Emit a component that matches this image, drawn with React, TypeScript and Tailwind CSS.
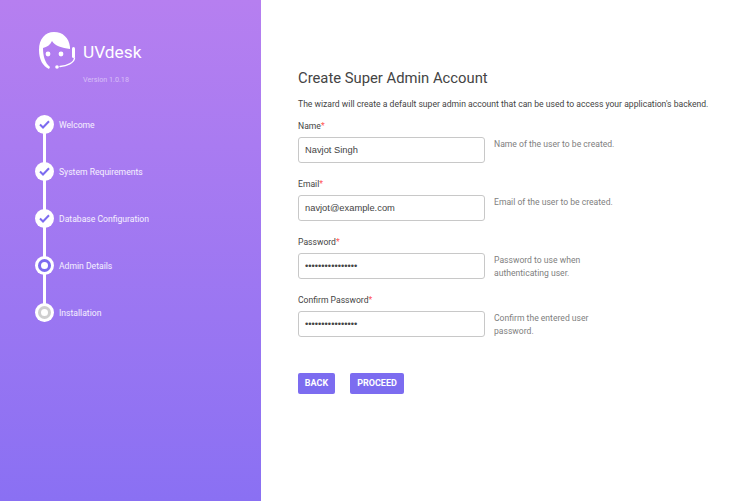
import React from 'react';

const font = { fontFamily: 'Roboto, sans-serif' };

const steps = [
  { label: 'Welcome', state: 'done' },
  { label: 'System Requirements', state: 'done' },
  { label: 'Database Configuration', state: 'done' },
  { label: 'Admin Details', state: 'active' },
  { label: 'Installation', state: 'todo' },
];

const fields = [
  { label: 'Name', value: 'Navjot Singh', type: 'text', help: 'Name of the user to be created.' },
  { label: 'Email', value: 'navjot@example.com', type: 'text', help: 'Email of the user to be created.' },
  { label: 'Password', value: 'aaaaaaaaaaaaaaaa', type: 'password', help: 'Password to use when authenticating user.' },
  { label: 'Confirm Password', value: 'aaaaaaaaaaaaaaaa', type: 'password', help: 'Confirm the entered user password.' },
];

function Logo() {
  return (
    <svg width="37" height="39" viewBox="0 0 37 39" fill="none" className="shrink-0">
      <path d="M10 37C4 34 0 28 0 18C0 7 6 0 15 0C24 0 30 6 31 15L31 17C23 16 16 14 13 9C11 13 8 15 4 16C4 24 6 31 11 35Z" fill="#fff" />
      <circle cx="9" cy="22" r="2.4" fill="#fff" />
      <circle cx="22" cy="22" r="2.4" fill="#fff" />
      <rect x="33" y="15" width="3" height="11" rx="1.5" fill="#fff" />
      <path d="M35.5 26C35 31 28 34 21 34.500" stroke="#fff" strokeWidth="1.4" strokeLinecap="round" />
      <circle cx="18" cy="35" r="1.8" fill="#fff" />
    </svg>
  );
}

function StepDot({ state }: { state: string }) {
  return (
    <div className="w-[19px] h-[19px] rounded-full bg-white flex items-center justify-center shrink-0">
      {state === 'done' && (
        <svg width="11" height="9" viewBox="0 0 11 9" fill="none">
          <path d="M1 4.5L4 7.5L10 1.2" stroke="#7c6cf0" strokeWidth="2" />
        </svg>
      )}
      {state === 'active' && <div className="w-[13px] h-[13px] rounded-full border-[3.5px] border-[#7c6cf0] bg-white" />}
      {state === 'todo' && <div className="w-[13px] h-[13px] rounded-full border-[3.5px] border-[#cfcfcf] bg-white" />}
    </div>
  );
}

export default function App() {
  return (
    <div className="flex w-[750px] h-[501px] overflow-hidden bg-white" style={font}>
      {/* Sidebar */}
      <aside className="w-[261px] shrink-0 bg-gradient-to-b from-[#b67ff0] to-[#8a70f3] pl-[35px]">
        <div className="flex items-center gap-[7px] pt-[32px] pl-[4px]">
          <Logo />
          <span className="text-[17.3px] leading-[28px] text-white">UVdesk</span>
        </div>
        <p className="text-[7.2px] leading-[12px] text-white/50 mt-[3px] pl-[48px]">Version 1.0.18</p>

        <ul className="mt-[29px]">
          {steps.map((step, i) => (
            <li key={step.label} className="relative flex items-start gap-[5px] h-[47px]">
              {i < steps.length - 1 && <div className="absolute left-[7.5px] top-[10px] w-[3px] h-[47px] bg-white" />}
              <div className="relative">
                <StepDot state={step.state} />
              </div>
              <span className="text-[8.6px] leading-[14px] pt-[2.5px] text-white/90">{step.label}</span>
            </li>
          ))}
        </ul>
      </aside>

      {/* Form */}
      <main className="flex-1 pl-[37px] pt-[68px] text-[#444]">
        <h1 className="text-[14.8px] leading-[20px] text-[#444]">Create Super Admin Account</h1>
        <p className="text-[8.6px] leading-[14px] mt-[9px]">
          The wizard will create a default super admin account that can be used to access your application's backend.
        </p>

        <div className="mt-[8px]">
          {fields.map(f => (
            <div key={f.label} className="h-[58px]">
              <label className="block text-[8.6px] leading-[14px] text-[#444]">
                {f.label}
                <span className="text-[#ff5656]">*</span>
              </label>
              <div className="flex gap-[9px] mt-[4px]">
                <input
                  readOnly
                  type={f.type}
                  value={f.value}
                  className="w-[187px] h-[26px] rounded-[3px] border border-[#c8c8c8] px-[6px] text-[9.33px] text-[#444] outline-none"
                  style={{ fontFamily: '"Liberation Sans", sans-serif' }}
                />
                <p className="w-[125px] pt-[1px] text-[8.6px] leading-[13px] text-[#808080]">{f.help}</p>
              </div>
            </div>
          ))}
        </div>

        <div className="flex gap-[15px] mt-[22px]">
          <button className="h-[21px] w-[37px] rounded-[2px] bg-[#7c6cf0] text-white text-[9px] font-bold">BACK</button>
          <button className="h-[21px] w-[54px] rounded-[2px] bg-[#7c6cf0] text-white text-[9px] font-bold">PROCEED</button>
        </div>
      </main>
    </div>
  );
}
